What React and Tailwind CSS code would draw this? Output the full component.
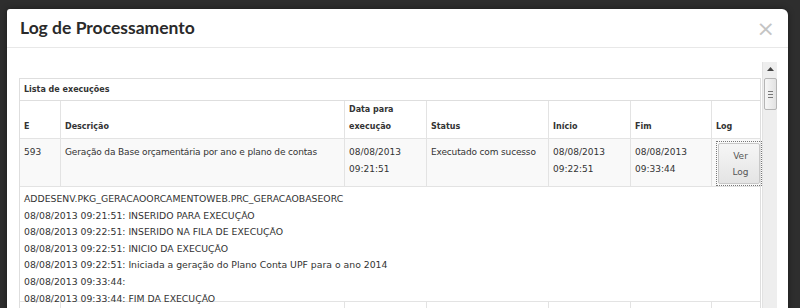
import React from 'react';

const font = { fontFamily: '"DejaVu Sans", Verdana, sans-serif' };

const logLines = [
    'ADDESENV.PKG_GERACAOORCAMENTOWEB.PRC_GERACAOBASEORC',
    '08/08/2013 09:21:51: INSERIDO PARA EXECUÇÃO',
    '08/08/2013 09:22:51: INSERIDO NA FILA DE EXECUÇÃO',
    '08/08/2013 09:22:51: INICIO DA EXECUÇÃO',
    '08/08/2013 09:22:51: Iniciada a geração do Plano Conta UPF para o ano 2014',
    '08/08/2013 09:33:44:',
    '08/08/2013 09:33:44: FIM DA EXECUÇÃO',
];

const cols = 'grid grid-cols-[40px_284px_82px_122px_82px_81px_1fr]';
const cell = 'border-l border-[#e3e3e3] first:border-l-0 pl-[4px] pr-[4px]';

const App = () => {
    return (
        <div className="h-[308px] overflow-hidden bg-[#2e2e2e] pt-[9px] pl-[7px]">
            <div className="w-[781px] bg-white rounded-tr-[6px] rounded-tl-[3px] h-[420px] shadow-[0_0_6px_rgba(0,0,0,0.4)]">
                {/* Header */}
                <div className="h-[39px] border-b border-[#e8e8e8] flex items-center justify-between pl-[13px] pr-[13px]">
                    <h3 className="text-[17.5px] font-bold text-[#2a2a2a] mt-[1px]" style={{ fontFamily: 'Lato, sans-serif' }}>
                        Log de Processamento
                    </h3>
                    <span className="text-[22px] leading-none text-[#c4c4c4] mt-[1px]" style={{ fontFamily: '"DejaVu Sans", sans-serif' }}>×</span>
                </div>

                {/* Body */}
                <div className="flex pl-[12px] pt-[14px]" style={font}>
                    <div className="w-[742px] pt-[16px]">
                        <div className="border border-[#dedede] text-[#333]">
                            <div className="h-[22px] flex items-center pl-[4px] text-[8px] font-bold border-b border-[#dedede]">
                                Lista de execuções
                            </div>

                            {/* Table header */}
                            <div className={`${cols} h-[38px] text-[8px] font-bold border-b border-[#e3e3e3]`}>
                                {['E', 'Descrição', 'Data para execução', 'Status', 'Início', 'Fim', 'Log'].map((h) => (
                                    <div key={h} className={`${cell} flex items-end pb-[6px] leading-[17px]`}>
                                        {h === 'Data para execução' ? (<span>Data para<br />execução</span>) : h}
                                    </div>
                                ))}
                            </div>

                            {/* Data row */}
                            <div className={`${cols} h-[48px] text-[9px] bg-[#f9f9f9] border-b border-[#e3e3e3] leading-[16.5px]`}>
                                <div className={`${cell} pt-[5px]`}>593</div>
                                <div className={`${cell} pt-[5px] tracking-[-0.15px]`}>Geração da Base orçamentária por ano e plano de contas</div>
                                <div className={`${cell} pt-[5px]`}>08/08/2013<br />09:21:51</div>
                                <div className={`${cell} pt-[5px] tracking-[-0.15px]`}>Executado com sucesso</div>
                                <div className={`${cell} pt-[5px]`}>08/08/2013<br />09:22:51</div>
                                <div className={`${cell} pt-[5px]`}>08/08/2013<br />09:33:44</div>
                                <div className={`${cell} pl-[1px] pt-[2px]`}>
                                    <div className="border border-dotted border-[#777] p-[1px] w-[46px] h-[45px]">
                                        <button className="w-full h-full border border-[#c8c8c8] rounded-[2px] bg-gradient-to-b from-[#f6f6f6] to-[#e4e4e4] text-[#555] text-[9px] leading-[16px] pl-[3px]">
                                            Ver<br />Log
                                        </button>
                                    </div>
                                </div>
                            </div>

                            {/* Log row */}
                            <div className="h-[115px] border-b border-[#e3e3e3] pl-[4px] pt-[4px] text-[9.3px] leading-[16.6px]">
                                {logLines.map((l, i) => (
                                    <div key={i}>{l}</div>
                                ))}
                            </div>

                            <div className={`${cols} h-[40px]`}>
                                {[0, 1, 2, 3, 4, 5, 6].map((i) => (
                                    <div key={i} className={cell}></div>
                                ))}
                            </div>
                        </div>
                    </div>

                    {/* Scrollbar */}
                    <div className="ml-[1px] w-[15px] h-[300px] bg-[#eeeeee] border-l border-[#e2e2e2] flex flex-col items-center">
                        <div className="h-[14px] w-full flex items-center justify-center">
                            <svg width="7" height="4" viewBox="0 0 7 4"><path d="M0 4 L3.5 0 L7 4 Z" fill="#444" /></svg>
                        </div>
                        <div className="mt-[2px] w-[13px] h-[32px] bg-gradient-to-r from-[#f7f7f7] to-[#e2e2e2] border border-[#b5b5b5] rounded-[2px] flex flex-col items-center justify-center gap-[2px]">
                            <div className="w-[5px] h-px bg-[#777]"></div>
                            <div className="w-[5px] h-px bg-[#777]"></div>
                            <div className="w-[5px] h-px bg-[#777]"></div>
                        </div>
                    </div>
                </div>
            </div>
        </div>
    );
};

export default App;
